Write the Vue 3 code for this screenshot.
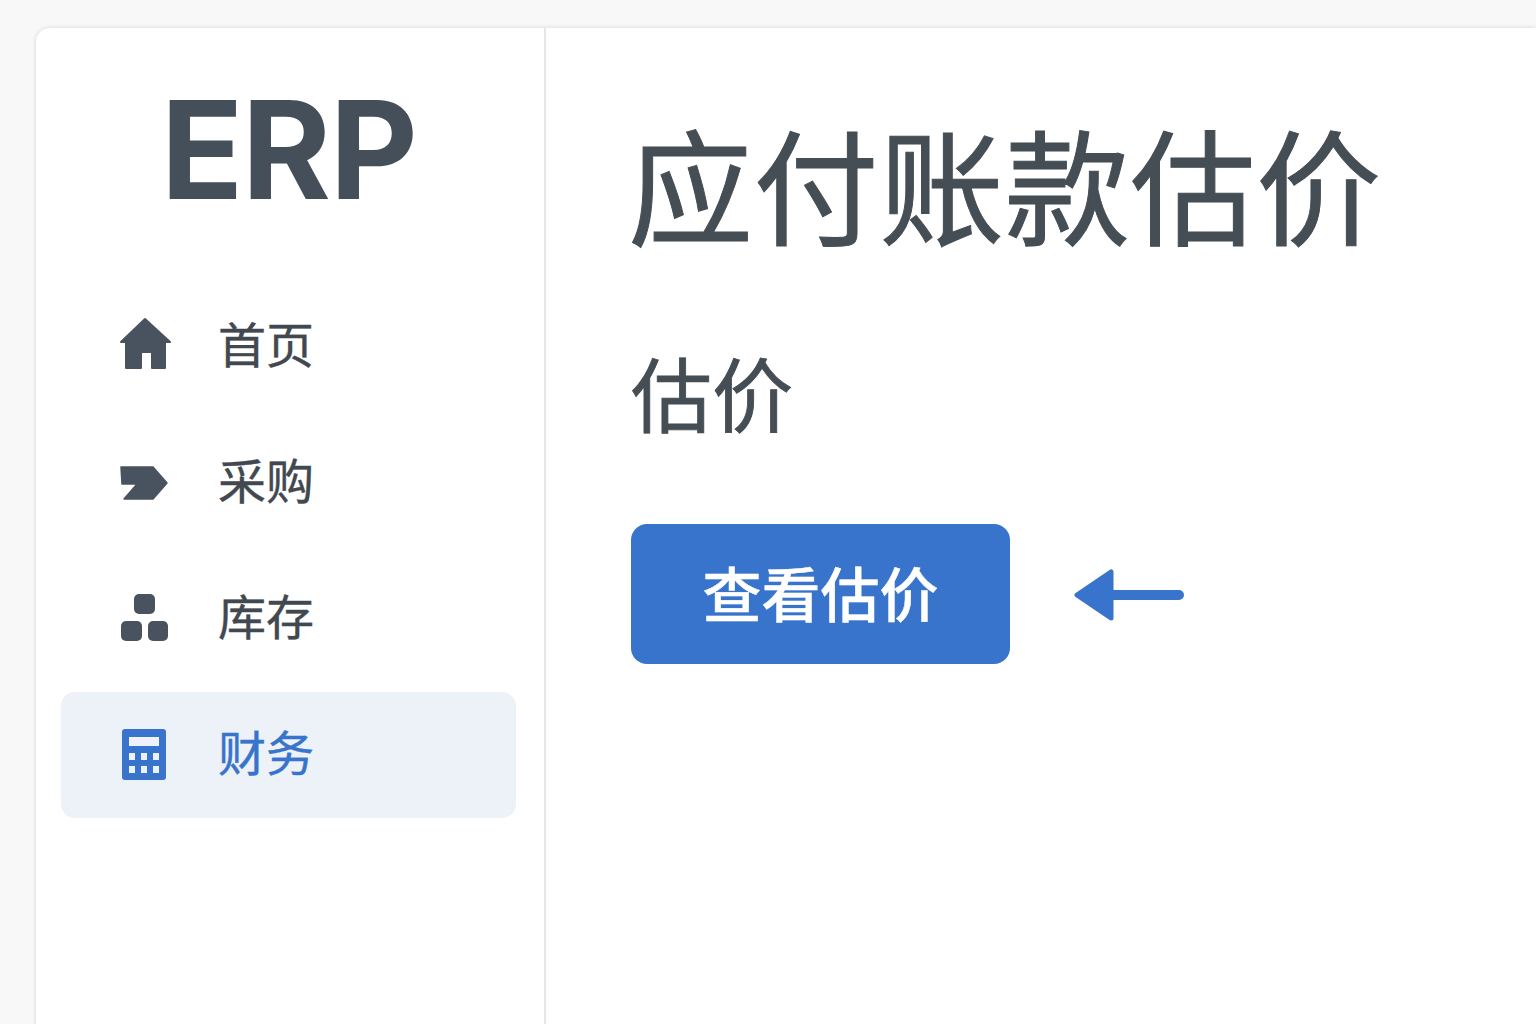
<template>
  <div class="page">
    <div class="card">
      <aside class="sidebar">
        <div class="logo">ERP</div>
        <nav class="nav">
          <a v-for="item in menu" :key="item.name" :class="['nav-item', { active: item.active }]">
            <svg class="nav-icon" viewBox="0 0 54 54" v-html="item.icon"></svg>
            <span class="nav-label">{{ item.name }}</span>
          </a>
        </nav>
      </aside>
      <main class="content">
        <h1>应付账款估价</h1>
        <h2>估价</h2>
        <div class="actions">
          <button class="quote-btn">查看估价</button>
          <svg class="arrow" viewBox="0 0 112 54">
            <path d="M4 28 L38 5 V51 Z" fill="#3874cb" stroke="#3874cb" stroke-width="5" stroke-linejoin="round" />
            <path d="M38 28 H106" stroke="#3874cb" stroke-width="10" stroke-linecap="round" />
          </svg>
        </div>
      </main>
    </div>
  </div>
</template>

<script setup>
// 메뉴 목록
const menu = [
  {
    name: '首页',
    icon: '<path fill="currentColor" stroke="currentColor" stroke-width="2" stroke-linejoin="round" d="M27 -1 L52 22 H47 V48 H34 V32 H23 V48 H8 V22 H3 Z" style="overflow:visible" />'
  },
  {
    name: '采购',
    icon: '<path fill="currentColor" stroke="currentColor" stroke-width="1.5" stroke-linejoin="round" d="M3 11 H35 L49 27 L35 43 H6 L19 28 H4 Z" />'
  },
  {
    name: '库存',
    icon: '<rect fill="currentColor" x="16" y="2" width="21" height="20" rx="5" /><rect fill="currentColor" x="3" y="29" width="21" height="20" rx="5" /><rect fill="currentColor" x="30" y="29" width="20" height="20" rx="5" />'
  },
  {
    name: '财务',
    active: true,
    icon: '<rect fill="currentColor" x="4" y="1" width="44" height="51" rx="3" /><g fill="#edf2f8"><rect x="11" y="9" width="30" height="9" /><rect x="11" y="25" width="6" height="7" /><rect x="23" y="25" width="6" height="7" /><rect x="35" y="25" width="6" height="7" /><rect x="11" y="38" width="6" height="7" /><rect x="23" y="38" width="6" height="7" /><rect x="35" y="38" width="6" height="7" /></g>'
  }
]
</script>

<style>
html, body {
  margin: 0;
  background: #f8f8f8;
}
</style>

<style scoped>
.page {
  height: 1024px;
  overflow: hidden;
  padding: 28px 0 0 36px;
  box-sizing: border-box;
  font-family: "Noto Sans CJK SC", "Noto Sans", sans-serif;
  color: #454d55;
}

.card {
  display: flex;
  height: 1100px;
  background: #fff;
  border-radius: 14px 0 0 0;
  box-shadow: 0 0 5px rgba(0, 0, 0, 0.14);
}

.sidebar {
  width: 510px;
  flex-shrink: 0;
  box-sizing: border-box;
  border-right: 2px solid #e6e6e6;
  padding: 0 28px 0 25px;
}

.logo {
  height: 256px;
  padding-top: 42px;
  box-sizing: border-box;
  text-align: center;
  font-family: Inter, sans-serif;
  font-size: 136px;
  font-weight: 650;
  line-height: 160px;
  color: #454f5a;
  letter-spacing: -1.5px;
}

.nav {
  display: flex;
  flex-direction: column;
  gap: 10px;
}

.nav-item {
  display: flex;
  align-items: center;
  height: 126px;
  padding-left: 57px;
  border-radius: 14px;
  font-size: 48px;
  color: #41484f;
}

.nav-label {
  margin-bottom: 10px;
  -webkit-text-stroke: 0.4px currentColor;
}

.nav-item.active {
  background: #edf2f8;
  color: #3874cb;
}

.nav-icon {
  width: 54px;
  height: 54px;
  margin-right: 46px;
  color: #49535f;
  overflow: visible;
}

.active .nav-icon {
  color: #3874cb;
}

.content {
  flex: 1;
  padding: 0 0 0 85px;
}

h1 {
  margin: 74px 0 0 -3px;
  font-size: 125px;
  font-weight: 400;
  line-height: 160px;
  letter-spacing: 0.6px;
  white-space: nowrap;
  -webkit-text-stroke: 1px currentColor;
}

h2 {
  margin: 74px 0 0;
  font-size: 81px;
  font-weight: 400;
  line-height: 110px;
  -webkit-text-stroke: 0.8px currentColor;
}

.actions {
  display: flex;
  align-items: center;
  margin-top: 78px;
}

.quote-btn {
  width: 379px;
  height: 140px;
  padding: 0 0 6px;
  border: 0;
  border-radius: 16px;
  background: #3874cb;
  color: #fff;
  font-family: inherit;
  font-size: 59px;
  font-weight: 500;
  -webkit-text-stroke: 0.5px currentColor;
}

.arrow {
  width: 112px;
  height: 54px;
  margin-left: 63px;
}
</style>
